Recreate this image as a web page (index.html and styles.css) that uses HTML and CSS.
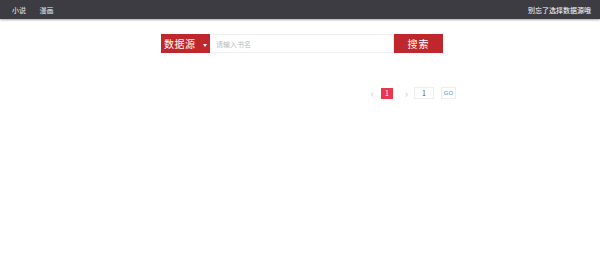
FILE: index.html
```html
<!DOCTYPE html>
<html lang="zh-CN">
<head>
  <meta charset="UTF-8">
  <title>小说 漫画</title>
  <link rel="stylesheet" href="styles.css">
</head>
<body>
  <div class="navbar">
    <div class="nav-left">
      <a href="#">小说</a>
      <a href="#">漫画</a>
    </div>
    <div class="nav-right">别忘了选择数据源哦</div>
  </div>

  <div class="search">
    <div class="source">数据源<span class="caret"></span></div>
    <input class="keyword" type="text" placeholder="请输入书名">
    <button class="search-btn">搜索</button>
  </div>

  <div class="pager">
    <span class="arrow">&lsaquo;</span>
    <span class="page current">1</span>
    <span class="arrow">&rsaquo;</span>
    <input class="jump" type="text" value="1">
    <button class="go">GO</button>
  </div>
</body>
</html>
```

FILE: styles.css
```css
body {
  margin: 0;
  padding: 0;
  background: #fff;
  font-family: "Noto Sans CJK SC", "Liberation Sans", sans-serif;
  color: #333;
}

.navbar {
  height: 19px;
  background: #3d3c42;
  box-shadow: 0 1px 2px rgba(0, 0, 0, 0.35);
  display: flex;
  justify-content: space-between;
  align-items: center;
  padding: 0 9px 0 12px;
  font-size: 7px;
  color: #fff;
}

.nav-left a {
  color: #eee;
  text-decoration: none;
  margin-right: 12px;
}

.nav-right {
  color: #fff;
}

.search {
  display: flex;
  width: 282px;
  height: 19px;
  margin: 15px auto 0;
  padding-left: 4px;
}

.source {
  width: 49px;
  background: #c0272d;
  color: #fff;
  font-size: 10px;
  letter-spacing: 0.5px;
  line-height: 19px;
  padding-left: 3px;
  box-sizing: border-box;
  white-space: nowrap;
}

.caret {
  display: inline-block;
  width: 0;
  height: 0;
  border-left: 2px solid transparent;
  border-right: 2px solid transparent;
  border-top: 3px solid #fff;
  vertical-align: middle;
  margin-left: 7px;
}

.keyword {
  flex: 1;
  height: 19px;
  box-sizing: border-box;
  border: 1px solid #eee;
  border-left: none;
  padding: 0 6px;
  font-size: 7px;
  font-family: inherit;
  outline: none;
}

.keyword::placeholder {
  color: #bbb;
}

.search-btn {
  width: 49px;
  height: 19px;
  border: none;
  background: #c0272d;
  color: #fff;
  font-size: 10px;
  font-family: inherit;
  padding: 0;
  letter-spacing: 1px;
}

.pager {
  display: flex;
  justify-content: flex-end;
  align-items: center;
  width: 300px;
  margin: 32px auto 0;
  padding-left: 12px;
  font-size: 7px;
}

.arrow {
  color: #ccc;
  font-size: 11px;
  width: 9px;
  text-align: center;
  margin: 0 1px 0 1px;
}

.arrow + .page {
  margin-left: 3px;
}

.page + .arrow {
  margin-left: 9px;
}

.page {
  width: 12px;
  height: 11px;
  line-height: 11px;
  text-align: center;
}

.page.current {
  background: #e8364d;
  color: #fff;
}

.jump {
  width: 20px;
  height: 12px;
  box-sizing: border-box;
  border: 1px solid #eee;
  font-size: 7px;
  text-align: center;
  padding: 0;
  margin-left: 2px;
  font-family: inherit;
  color: #555;
}

.go {
  width: 15px;
  height: 12px;
  border: 1px solid #eee;
  background: #fff;
  color: #4a90d9;
  font-size: 6px;
  padding: 0;
  margin-left: 7px;
  font-family: "Liberation Sans", sans-serif;
}
```
